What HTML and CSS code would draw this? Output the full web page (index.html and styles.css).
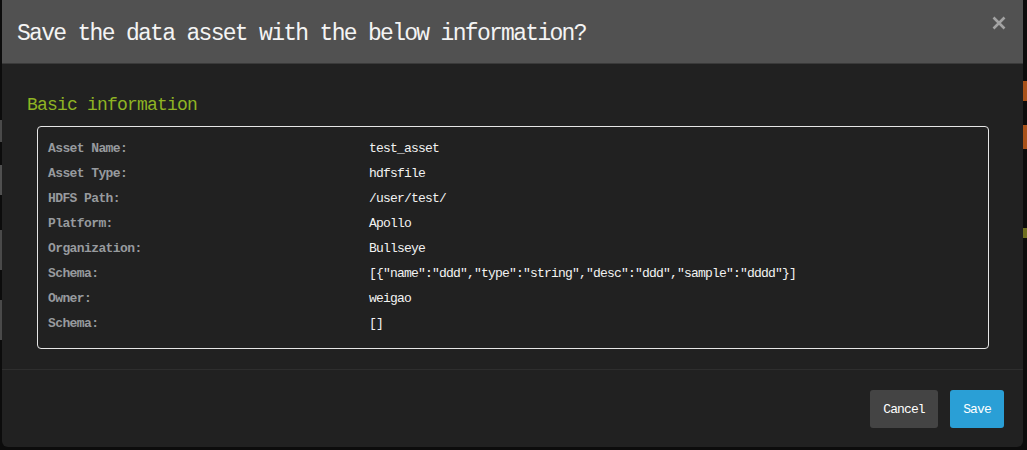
FILE: index.html
```html
<!DOCTYPE html>
<html>
<head>
<meta charset="utf-8">
<link rel="stylesheet" href="styles.css">
</head>
<body>
<div class="backdrop">
  <span class="bit bit-a"></span>
  <span class="bit bit-b"></span>
  <span class="bit bit-c"></span>
</div>
<div class="modal">
  <div class="modal-header">
    <h4 class="modal-title">Save the data asset with the below information?</h4>
    <button class="close" aria-label="Close">
      <svg width="14" height="14" viewBox="0 0 14 14"><path d="M1.5 1.5 L12.5 12.5 M12.5 1.5 L1.5 12.5" stroke="#a3a3a3" stroke-width="2.6" stroke-linecap="butt"/></svg>
    </button>
  </div>
  <div class="modal-body">
    <h5 class="section-title">Basic information</h5>
    <div class="info-box">
      <div class="row"><div class="label">Asset Name:</div><div class="value">test_asset</div></div>
      <div class="row"><div class="label">Asset Type:</div><div class="value">hdfsfile</div></div>
      <div class="row"><div class="label">HDFS Path:</div><div class="value">/user/test/</div></div>
      <div class="row"><div class="label">Platform:</div><div class="value">Apollo</div></div>
      <div class="row"><div class="label">Organization:</div><div class="value">Bullseye</div></div>
      <div class="row"><div class="label">Schema:</div><div class="value">[{"name":"ddd","type":"string","desc":"ddd","sample":"dddd"}]</div></div>
      <div class="row"><div class="label">Owner:</div><div class="value">weigao</div></div>
      <div class="row"><div class="label">Schema:</div><div class="value">[]</div></div>
    </div>
  </div>
  <div class="modal-footer">
    <button class="btn btn-cancel">Cancel</button>
    <button class="btn btn-save">Save</button>
  </div>
</div>
</body>
</html>
```
FILE: styles.css
```css
html, body {
  margin: 0;
  padding: 0;
}
body {
  width: 1027px;
  height: 450px;
  background: #101010;
  position: relative;
  overflow: hidden;
  font-family: "Liberation Mono", "DejaVu Sans Mono", monospace;
}
.backdrop {
  position: absolute;
  inset: 0;
  background:
    linear-gradient(to right, #4a4a4a 0, #4a4a4a 2px, transparent 2px) 0 120px / 2px 22px no-repeat,
    linear-gradient(to right, #505050 0, #505050 2px, transparent 2px) 0 165px / 2px 30px no-repeat,
    linear-gradient(to right, #4a4a4a 0, #4a4a4a 2px, transparent 2px) 0 230px / 2px 40px no-repeat,
    linear-gradient(to right, #4a4a4a 0, #4a4a4a 2px, transparent 2px) 0 300px / 2px 40px no-repeat,
    #0c0c0c;
}
.bit {
  position: absolute;
  right: 0;
  width: 4px;
}
.bit-a { top: 81px; height: 20px; background: #a8521a; }
.bit-b { top: 125px; height: 24px; background: #a8521a; }
.bit-c { top: 228px; height: 10px; background: #6e6e20; }

.modal {
  position: relative;
  margin-left: 2px;
  width: 1021px;
  height: 447px;
  background: #212121;
  border-radius: 0 0 6px 6px;
  display: flex;
  flex-direction: column;
}
.modal-header {
  height: 63px;
  background: #515151;
  border-bottom: 1px solid #3a3a3a;
  display: flex;
  align-items: center;
  justify-content: space-between;
  padding: 0 17px 0 15px;
  box-sizing: content-box;
}
.modal-title {
  margin: 4px 0 0 0;
  font-weight: normal;
  font-size: 23px;
  letter-spacing: -1.7px;
  color: #f4f4f4;
  line-height: 26px;
}
.close {
  background: none;
  border: 0;
  padding: 0;
  margin-top: -18px;
  width: 14px;
  height: 14px;
  display: flex;
}
.modal-body {
  padding: 31px 34px 20px 25px;
  border-bottom: 1px solid #2e2e2e;
}
.section-title {
  margin: 0 0 11px 0;
  font-weight: normal;
  font-size: 18px;
  letter-spacing: -0.8px;
  line-height: 20px;
  color: #8fb423;
}
.info-box {
  margin-left: 10px;
  border: 1px solid #e6e6e6;
  border-radius: 4px;
  padding: 9px 10px 12px 10px;
}
.row {
  display: flex;
  height: 25px;
  align-items: center;
}
.label {
  width: 321px;
  font-size: 13px;
  font-weight: bold;
  letter-spacing: -0.6px;
  color: #979a9e;
}
.value {
  font-size: 13px;
  letter-spacing: -0.8px;
  color: #f2f2f2;
}
.modal-footer {
  flex: 1;
  display: flex;
  justify-content: flex-end;
  align-items: flex-start;
  gap: 12px;
  padding: 20px 19px 0 0;
}
.btn {
  height: 38px;
  border: 0;
  border-radius: 3px;
  font-family: "Liberation Mono", "DejaVu Sans Mono", monospace;
  font-size: 13px;
  letter-spacing: -0.9px;
  color: #ffffff;
  padding: 0;
}
.btn-cancel {
  width: 68px;
  background: #444444;
}
.btn-save {
  width: 54px;
  background: #2a9fd6;
}
```
